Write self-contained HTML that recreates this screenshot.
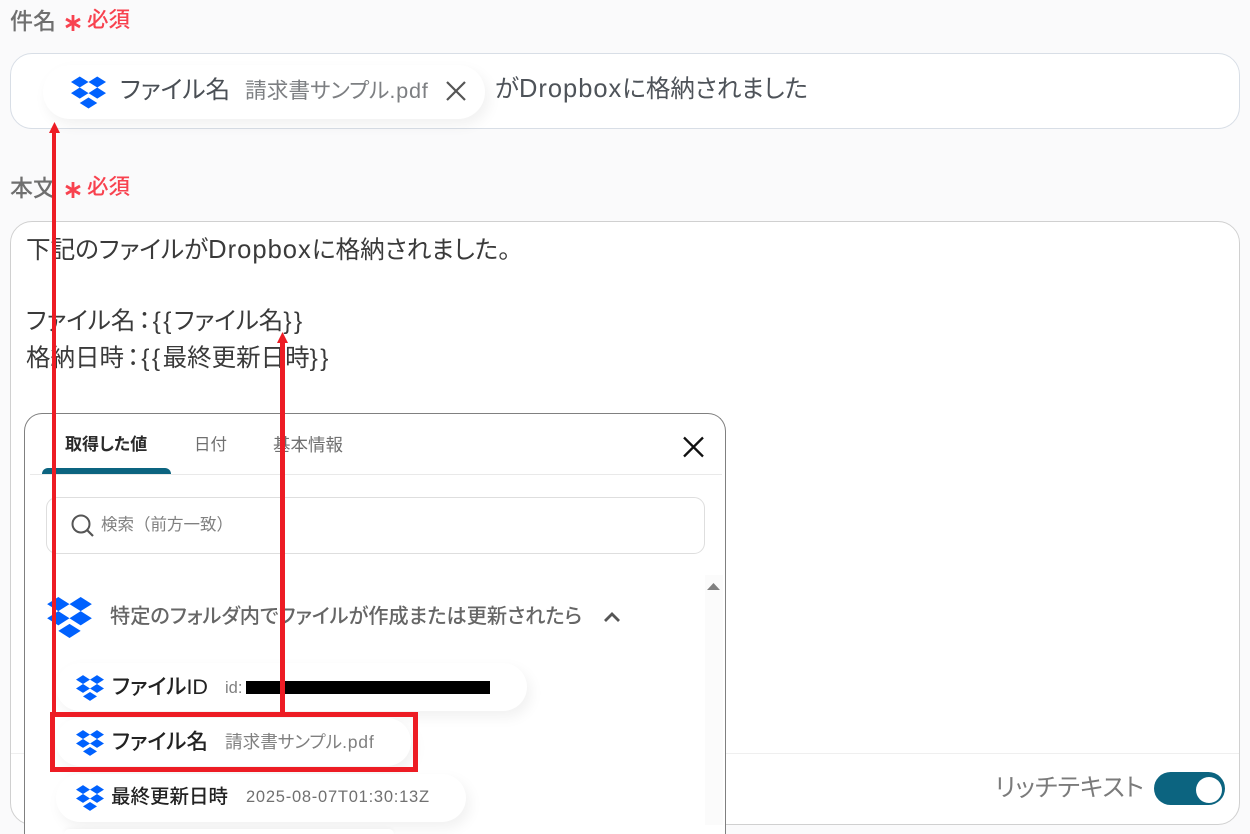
<!DOCTYPE html>
<html lang="ja"><head><meta charset="utf-8"><style>
*{box-sizing:border-box}
html,body{margin:0;padding:0;width:1250px;height:834px;overflow:hidden;background:#fafafb;font-family:"Liberation Sans","Noto Sans CJK JP",sans-serif;font-feature-settings:"palt"}
body{position:relative}
.a{position:absolute}
.t{position:absolute;white-space:nowrap;line-height:1.2}
.pill{position:absolute;background:#fff;border-radius:30px;box-shadow:4px 6px 14px rgba(0,0,0,.06)}
.r{position:absolute;background:#ed1c24}
svg{position:absolute;display:block}
.l{letter-spacing:1px;font-size:1.040em}
.s{letter-spacing:.75px}
.b{letter-spacing:2.500px}
.c{margin:0 2px 0 3px}
</style></head><body>
<svg width="0" height="0" style="left:0;top:0"><defs><symbol id="db" viewBox="0 0 36 33"><path fill="#0061fe" d="M9 0l9 5.700-9 5.700-9-5.700zM27 0l9 5.700-9 5.700-9-5.700zM9 11.400l9 5.700-9 5.700-9-5.700zM27 11.400l9 5.700-9 5.700-9-5.700zM18 21.600l9 5.700-9 5.700-9-5.700z"/></symbol><symbol id="ast" viewBox="0 0 16 16"><path d="M8 0v16M1 4l14 8M15 4L1 12" stroke="#f8424f" stroke-width="2.800" fill="none"/></symbol></defs></svg>

<div class="t" style="left:10px;top:8px;font-size:23px;font-weight:500;color:#6f6f6f">件名</div>
<svg style="left:65px;top:15px" width="16" height="16"><use href="#ast"/></svg>
<div class="t" style="left:87px;top:8px;font-size:21.500px;color:#f8424f;font-weight:500">必須</div>

<div class="a" style="left:10px;top:53px;width:1230px;height:76px;background:#fff;border:1.500px solid #d8dee6;border-radius:22px"></div>
<div class="pill" style="left:43px;top:65px;width:442px;height:54px"></div>
<svg style="left:71px;top:76px" width="35" height="33"><use href="#db"/></svg>
<div class="t" style="left:120px;top:76px;font-size:24.700px;color:#4a4f55">ファイル名</div>
<div class="t" style="left:245px;top:78px;font-size:21.700px;color:#7d7f82">請求書サンプル<span class="s">.pdf</span></div>
<svg style="left:445px;top:80px" width="22" height="22" viewBox="0 0 22 22"><path d="M2 2l18 18M20 2L2 20" stroke="#555" stroke-width="2.200" fill="none"/></svg>
<div class="t" style="left:495px;top:74px;font-size:24.500px;color:#4e5359">が<span class="l">Dropbox</span>に格納されました</div>

<div class="t" style="left:10px;top:175px;font-size:23px;font-weight:500;color:#6f6f6f">本文</div>
<svg style="left:65px;top:182px" width="16" height="16"><use href="#ast"/></svg>
<div class="t" style="left:87px;top:175px;font-size:21.500px;color:#f8424f;font-weight:500">必須</div>

<div class="a" style="left:10px;top:221px;width:1230px;height:604px;background:#fff;border:1.500px solid #d0d0d0;border-radius:22px"></div>
<div class="a" style="left:11px;top:753px;width:1228px;height:1px;background:#efefef"></div>
<div class="t" style="left:26px;top:235px;font-size:24.600px;color:#3a3a3a">下記のファイルが<span class="l">Dropbox</span>に格納されました。</div>
<div class="t" style="left:26px;top:307px;font-size:24.500px;color:#3a3a3a">ファイル名<span class="c">：</span><span class="b">{{</span>ファイル名<span class="b">}}</span></div>
<div class="t" style="left:26px;top:344px;font-size:24.500px;color:#3a3a3a">格納日時<span class="c">：</span><span class="b">{{</span>最終更新日時<span class="b">}}</span></div>

<div class="t" style="left:995px;top:774px;font-size:24.800px;color:#7b7b7b">リッチテキスト</div>
<div class="a" style="left:1154px;top:772px;width:71px;height:33px;border-radius:17px;background:#0c6480"></div>
<div class="a" style="left:1196px;top:777px;width:26px;height:26px;border-radius:50%;background:#fff"></div>

<div class="a" style="left:24px;top:413px;width:702px;height:421px;background:#fff;border:1.500px solid #808080;border-bottom:0;border-radius:18px 18px 0 0"></div>
<div class="t" style="left:65px;top:435px;font-size:17px;font-weight:700;color:#2b2b2b">取得した値</div>
<div class="t" style="left:194px;top:436px;font-size:16.500px;color:#707070">日付</div>
<div class="t" style="left:273px;top:435px;font-size:17.500px;color:#707070">基本情報</div>
<div class="a" style="left:42px;top:468px;width:129px;height:7px;background:#0c6480;border-radius:6px 6px 0 0"></div>
<div class="a" style="left:30px;top:474px;width:692px;height:1px;background:#e9e9e9"></div>
<svg style="left:682px;top:436px" width="23" height="22" viewBox="0 0 23 22"><path d="M2 1.500l19 19M21 1.500L2 20.500" stroke="#111" stroke-width="2.300" fill="none"/></svg>

<div class="a" style="left:46px;top:497px;width:659px;height:57px;border:1.500px solid #dedede;border-radius:11px"></div>
<svg style="left:70px;top:513px" width="26" height="26" viewBox="0 0 26 26"><circle cx="11" cy="11" r="8.500" fill="none" stroke="#555" stroke-width="2"/><path d="M17 17l6 6" stroke="#555" stroke-width="2.200"/></svg>
<div class="t" style="left:101px;top:516px;font-size:16.500px;color:#808080;font-feature-settings:normal">検索（前方一致）</div>

<div class="a" style="left:705px;top:575px;width:18px;height:250px;background:#fbfbfb"></div>
<svg style="left:707px;top:582px" width="13" height="9"><path d="M6.500 1L13 8H0z" fill="#808080"/></svg>

<svg style="left:47px;top:597px" width="45" height="41"><use href="#db"/></svg>
<div class="t" style="left:110px;top:605px;font-size:20.200px;font-weight:500;color:#666">特定のフォルダ内でファイルが作成または更新されたら</div>
<svg style="left:602px;top:610px" width="20" height="14" viewBox="0 0 20 14"><path d="M3 11l7-7 7 7" stroke="#555" stroke-width="2.800" fill="none"/></svg>

<div class="pill" style="left:56px;top:663px;width:471px;height:48px"></div>
<svg style="left:76px;top:675px" width="28" height="26"><use href="#db"/></svg>
<div class="t" style="left:112px;top:675px;font-size:21.500px;font-weight:500;color:#222">ファイルID</div>
<div class="t" style="left:225px;top:679px;font-size:16.500px;color:#808080">id:</div>
<div class="a" style="left:246px;top:681px;width:244px;height:13px;background:#000"></div>

<div class="pill" style="left:56px;top:718px;width:355px;height:48px"></div>
<svg style="left:76px;top:730px" width="28" height="26"><use href="#db"/></svg>
<div class="t" style="left:112px;top:730px;font-size:21.500px;font-weight:500;color:#222">ファイル名</div>
<div class="t" style="left:225px;top:732px;font-size:17.600px;color:#808080">請求書サンプル<span class="s">.pdf</span></div>

<div class="pill" style="left:56px;top:774px;width:410px;height:48px"></div>
<svg style="left:76px;top:785px" width="28" height="26"><use href="#db"/></svg>
<div class="t" style="left:111px;top:786px;font-size:19.500px;font-weight:500;color:#222">最終更新日時</div>
<div class="t" style="left:246px;top:788px;font-size:16.500px;letter-spacing:.75px;color:#707070">2025-08-07T01:30:13Z</div>

<div class="a" style="left:64px;top:829px;width:330px;height:5px;background:#fff;border-radius:5px 5px 0 0;box-shadow:0 -1px 4px rgba(0,0,0,.04)"></div>

<div class="a" style="left:50px;top:712px;width:368px;height:60px;border:5px solid #ed1c24"></div>
<div class="r" style="left:52px;top:132px;width:4px;height:581px"></div>
<svg style="left:49px;top:122px" width="11" height="12"><path d="M5.500 0L11 11H0z" fill="#ed1c24"/></svg>
<div class="r" style="left:280px;top:342px;width:5px;height:372px"></div>
<svg style="left:277px;top:332px" width="11" height="12"><path d="M5.500 0L11 11H0z" fill="#ed1c24"/></svg>
</body></html>
